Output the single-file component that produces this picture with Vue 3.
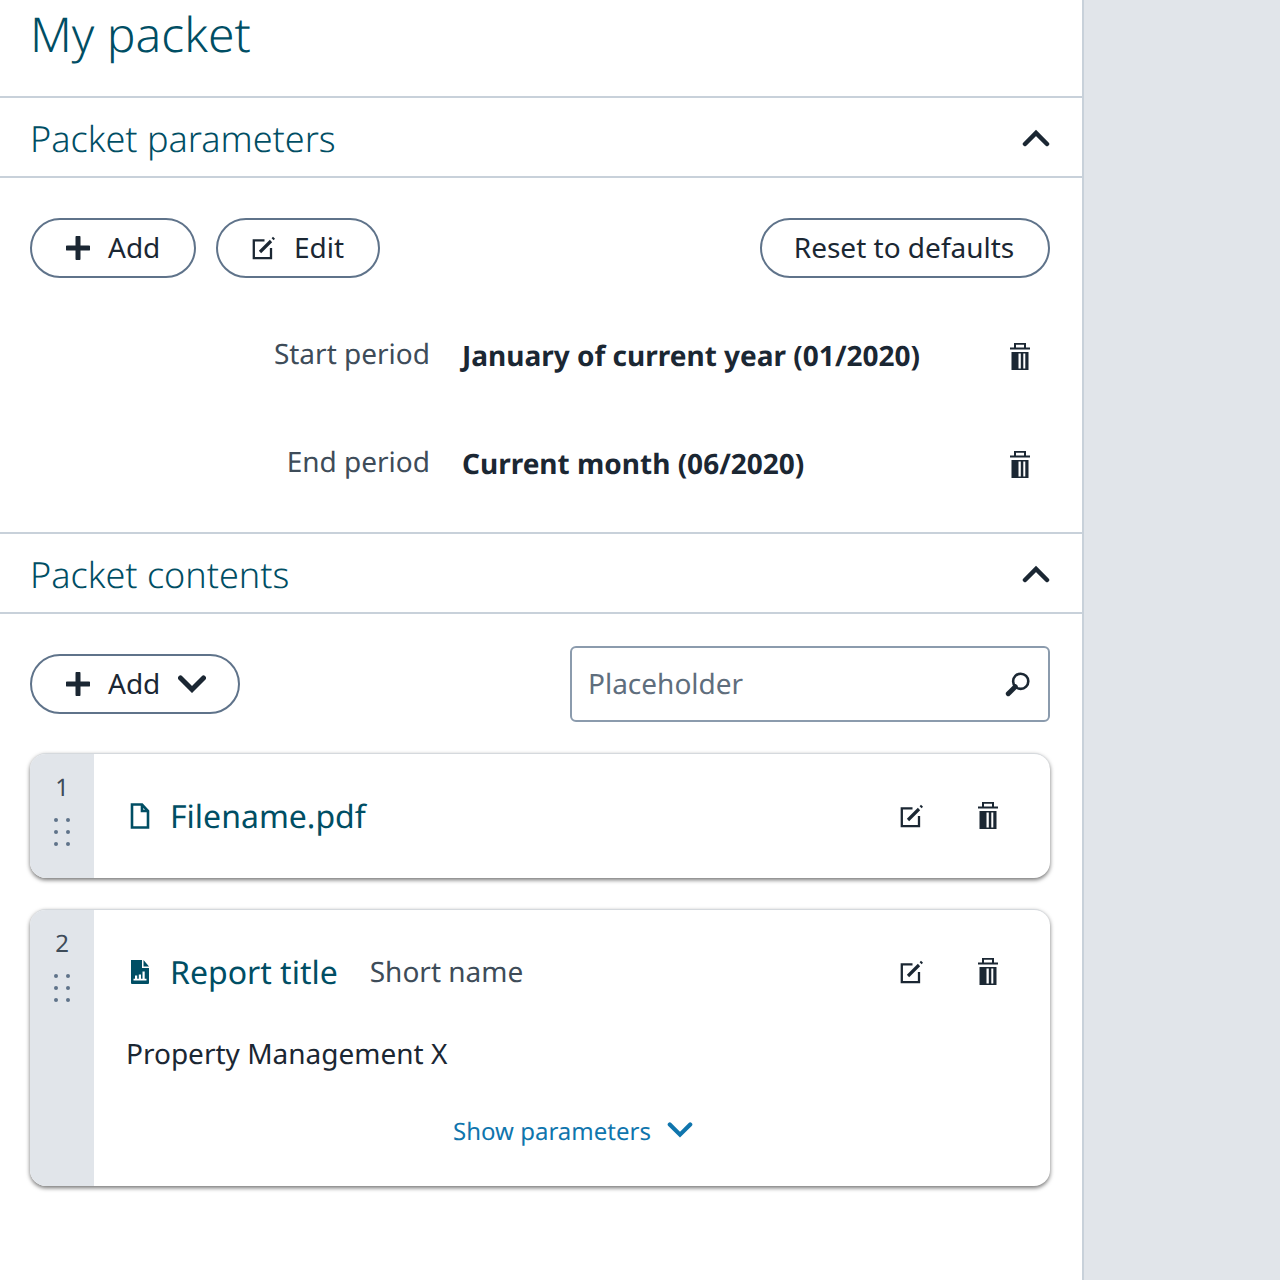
<script setup>
const params = [
  { label: 'Start period', value: 'January of current year (01/2020)' },
  { label: 'End period', value: 'Current month (06/2020)' }
]
const trashPath = 'M4 0h12v4.500h4v2H0v-2h4zm2 1.800v2.700h8V1.800zM1.500 9h17v18h-17zM8.500 10.500v15h2.300v-15zm4.800 0v15h2v-15z'
</script>

<template>
  <div class="page">
    <main class="packet">
      <h1 class="title">My packet</h1>

      <section class="section">
        <header class="section-head">
          <h2>Packet parameters</h2>
          <svg class="chevron" viewBox="0 0 28 18"><path d="M3 15 14 4l11 11" /></svg>
        </header>
        <div class="params-body">
          <div class="toolbar">
            <button class="pill add-btn">
              <svg class="plus" viewBox="0 0 24 24"><path d="M12 1.500v21M1.500 12h21" /></svg>
              Add
            </button>
            <button class="pill edit-btn">
              <svg class="edit" viewBox="0 0 24 24">
                <path class="stroke" d="M12.500 4.400H1.800v17.800H19V12" />
                <path class="stroke thick" d="M8 16 19 5" />
                <path d="M21 .8l2 2-1.400 1.400-2-2z" />
              </svg>
              Edit
            </button>
            <button class="pill reset-btn">Reset to defaults</button>
          </div>
          <div class="param" v-for="p in params" :key="p.label">
            <span class="param-label">{{ p.label }}</span>
            <strong class="param-value">{{ p.value }}</strong>
            <svg class="trash" viewBox="0 0 20 28"><path :d="trashPath" fill-rule="evenodd" /></svg>
          </div>
        </div>
      </section>

      <section class="section">
        <header class="section-head">
          <h2>Packet contents</h2>
          <svg class="chevron" viewBox="0 0 28 18"><path d="M3 15 14 4l11 11" /></svg>
        </header>
        <div class="contents-body">
          <div class="contents-toolbar">
            <button class="pill add-menu-btn">
              <svg class="plus" viewBox="0 0 24 24"><path d="M12 1.500v21M1.500 12h21" /></svg>
              Add
              <svg class="caret" viewBox="0 0 28 18"><path d="M2.500 3 14 14.500 25.500 3" /></svg>
            </button>
            <div class="search">
              <span class="placeholder">Placeholder</span>
              <svg class="lens" viewBox="0 0 24 24">
                <circle cx="14.500" cy="9.500" r="7" />
                <path d="M9.500 14.500 3 21" />
              </svg>
            </div>
          </div>

          <article class="card">
            <aside class="handle">
              <span class="index">1</span>
              <span class="dots"><i v-for="n in 6" :key="n"></i></span>
            </aside>
            <div class="card-body">
              <div class="card-row">
                <svg class="file" viewBox="0 0 20 26"><path d="M2 1.500h10l6 6.500v16.500H2zM12 1.500V8h6" /></svg>
                <span class="name">Filename.pdf</span>
                <span class="actions">
                  <svg class="edit" viewBox="0 0 24 24">
                    <path class="stroke" d="M12.500 4.400H1.800v17.800H19V12" />
                    <path class="stroke thick" d="M8 16 19 5" />
                    <path d="M21 .8l2 2-1.400 1.400-2-2z" />
                  </svg>
                  <svg class="trash" viewBox="0 0 20 28"><path :d="trashPath" fill-rule="evenodd" /></svg>
                </span>
              </div>
            </div>
          </article>

          <article class="card">
            <aside class="handle">
              <span class="index">2</span>
              <span class="dots"><i v-for="n in 6" :key="n"></i></span>
            </aside>
            <div class="card-body">
              <div class="card-row">
                <svg class="file solid" viewBox="0 0 20 26">
                  <path d="M1 1h11v8h7v15a1 1 0 0 1-1 1H2a1 1 0 0 1-1-1z" />
                  <path d="M13.500 1 19 7.500h-5.500z" />
                  <path class="chart" d="M3.500 19.800h13v1.800h-13zM5 16.500h2.200v3.500H5zM8.800 15.500H11v4.500H8.800zM12.500 12.500h2.200v7.500h-2.200z" />
                </svg>
                <span class="name">Report title</span>
                <span class="short">Short name</span>
                <span class="actions">
                  <svg class="edit" viewBox="0 0 24 24">
                    <path class="stroke" d="M12.500 4.400H1.800v17.800H19V12" />
                    <path class="stroke thick" d="M8 16 19 5" />
                    <path d="M21 .8l2 2-1.400 1.400-2-2z" />
                  </svg>
                  <svg class="trash" viewBox="0 0 20 28"><path :d="trashPath" fill-rule="evenodd" /></svg>
                </span>
              </div>
              <p class="property">Property Management X</p>
              <div class="show">
                <span>Show parameters</span>
                <svg class="show-caret" viewBox="0 0 28 18"><path d="M3 3 14 14 25 3" /></svg>
              </div>
            </div>
          </article>
        </div>
      </section>
    </main>
    <div class="side"></div>
  </div>
</template>

<style scoped>
.page {
  display: flex;
  height: 1280px;
  overflow: hidden;
  font-family: "Noto Sans", "Open Sans", sans-serif;
  text-rendering: geometricPrecision;
  color: #1b2733;
}

.packet {
  width: 1082px;
  background: #fff;
}

.side {
  flex: 1;
  background: #e1e5ea;
  border-left: 2px solid #c8d1da;
}

.title {
  height: 96px;
  margin: 0;
  padding-left: 30px;
  box-sizing: border-box;
  font-size: 48px;
  font-weight: 300;
  line-height: 70px;
  color: #004e64;
}

.section-head {
  display: flex;
  align-items: center;
  justify-content: space-between;
  height: 78px;
  padding: 0 32px 0 30px;
  border-top: 2px solid #c8d1da;
  border-bottom: 2px solid #c8d1da;
  box-sizing: content-box;
}

.section-head h2 {
  margin: 2px 0 0;
  font-size: 36px;
  font-weight: 300;
  color: #004e64;
}

.chevron {
  width: 28px;
  height: 18px;
  margin-top: 2px;
  fill: none;
  stroke: #1b2733;
  stroke-width: 4.500;
  stroke-linecap: round;
}

.params-body {
  height: 354px;
  padding: 40px 32px 0 30px;
  box-sizing: border-box;
}

.toolbar {
  display: flex;
  gap: 20px;
  margin-bottom: 25px;
}

.pill {
  display: inline-flex;
  align-items: center;
  height: 60px;
  padding: 0 0 2px;
  border: 2px solid #5f738a;
  border-radius: 30px;
  background: #fff;
  font: inherit;
  font-size: 28px;
  color: #1b2733;
  box-sizing: border-box;
}

.pill svg {
  margin-top: 2px;
}

.add-btn {
  width: 166px;
  padding-left: 34px;
  gap: 18px;
}

.edit-btn {
  width: 164px;
  padding-left: 34px;
  gap: 18px;
}

.reset-btn {
  width: 290px;
  margin-left: auto;
  padding-right: 2px;
  justify-content: center;
}

.plus {
  width: 24px;
  height: 24px;
  fill: none;
  stroke: #1b2733;
  stroke-width: 5;
  stroke-linecap: round;
}

.edit {
  width: 24px;
  height: 24px;
  fill: #1b2733;
}

.edit .stroke {
  fill: none;
  stroke: #1b2733;
  stroke-width: 2.300;
}

.edit .thick {
  stroke-width: 3.200;
}

.param {
  display: flex;
  align-items: center;
  height: 108px;
  padding-bottom: 2px;
  box-sizing: border-box;
}

.param-label {
  width: 400px;
  margin: 0 32px 4px 0;
  text-align: right;
  font-size: 28px;
  color: #3e4c59;
}

.param-value {
  flex: 1;
  font-size: 28px;
  font-weight: 700;
  color: #1b2733;
}

.trash {
  width: 20px;
  height: 28px;
  fill: #1b2733;
}

.param .trash {
  margin: 1px 20px 0 0;
}

.contents-body {
  padding: 32px 32px 0 30px;
}

.contents-toolbar {
  display: flex;
  align-items: center;
  justify-content: space-between;
  height: 76px;
  margin-bottom: 31px;
}

.add-menu-btn {
  width: 210px;
  padding-left: 34px;
  gap: 18px;
}

.caret {
  width: 28px;
  height: 18px;
  fill: none;
  stroke: #1b2733;
  stroke-width: 5;
  stroke-linecap: round;
}

.search {
  display: flex;
  align-items: center;
  justify-content: space-between;
  width: 480px;
  height: 76px;
  padding: 0 17px 0 16px;
  border: 2px solid #8b9bad;
  border-radius: 6px;
  box-sizing: border-box;
}

.placeholder {
  font-size: 28px;
  color: #5f6e7d;
}

.lens {
  width: 26px;
  height: 26px;
  fill: none;
  stroke: #1b2733;
  stroke-width: 2.400;
}

.lens path {
  stroke-width: 4.500;
  stroke-linecap: round;
}

.card {
  display: flex;
  margin-bottom: 31px;
  border-radius: 16px;
  border-top: 1px solid #d5d9dd;
  overflow: hidden;
  box-shadow: 0 2px 4px rgba(0, 0, 0, 0.55);
  background: #fff;
}

.handle {
  display: flex;
  flex-direction: column;
  align-items: center;
  width: 64px;
  flex-shrink: 0;
  padding-top: 17px;
  background: #e1e5ea;
}

.index {
  font-size: 24px;
  line-height: 34px;
  color: #3e4c59;
}

.dots {
  display: grid;
  grid-template-columns: 4px 4px;
  gap: 8px;
  margin-top: 13px;
}

.dots i {
  width: 4px;
  height: 4px;
  border-radius: 50%;
  background: #5f738a;
}

.card-body {
  flex: 1;
  padding: 0 52px 0 32px;
}

.card-row {
  display: flex;
  align-items: center;
  height: 124px;
}

.file {
  width: 20px;
  height: 28px;
  margin: 0 20px 0 4px;
  fill: none;
  stroke: #004e64;
  stroke-width: 2.600;
}

.file.solid {
  fill: #004e64;
  stroke: none;
}

.file .chart {
  fill: #fff;
}

.name {
  font-size: 32px;
  color: #004e64;
}

.short {
  margin-left: 32px;
  font-size: 28px;
  color: #3e4c59;
}

.actions {
  display: flex;
  align-items: center;
  gap: 54px;
  margin-left: auto;
}

.property {
  margin: 0;
  font-size: 28px;
  line-height: 40px;
  color: #1b2733;
}

.show {
  display: flex;
  align-items: center;
  justify-content: center;
  gap: 16px;
  height: 60px;
  margin: 26px -52px 26px -30px;
  font-size: 24px;
  color: #0f75ad;
}

.show span {
  padding-top: 2px;
}

.show-caret {
  width: 26px;
  height: 18px;
  fill: none;
  stroke: #0f75ad;
  stroke-width: 4.500;
  stroke-linecap: round;
}
</style>
